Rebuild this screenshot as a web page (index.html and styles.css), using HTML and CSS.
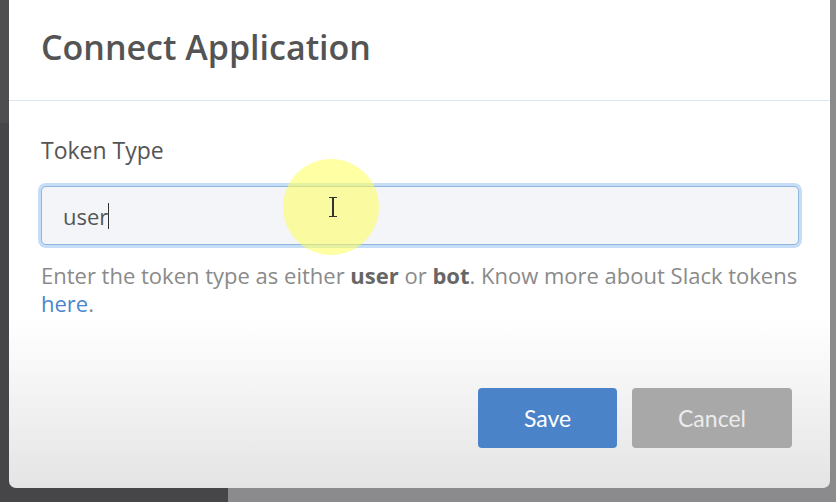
FILE: index.html
```
<!DOCTYPE html>
<html lang="en">
  <head>
    <meta charset="UTF-8" />
    <meta name="viewport" content="width=device-width, initial-scale=1.0" />
    <title>Connect Application</title>
    <link rel="stylesheet" href="styles.css">
  </head>
  <body>
    <div class="backdrop">
      <div class="backdropLeft"></div>
      <div class="backdropRight"></div>
    </div>

    <div class="modal">
      <div class="modalHeader">
        <h1 class="title">Connect Application</h1>
      </div>

      <div class="modalBody">
        <label class="label">Token Type</label>
        <div class="input">
          <span class="value">user</span><span class="caret"></span>
        </div>
        <p class="help">
          Enter the token type as either <b>user</b> or <b>bot</b>. Know more about Slack tokens
          <a href="#">here</a>.
        </p>
      </div>

      <div class="modalFooter">
        <button class="btn save">Save</button>
        <button class="btn cancel">Cancel</button>
      </div>

      <!-- screen recorder click highlight -->
      <div class="highlight"></div>
      <div class="ibeam"></div>
    </div>
  </body>
</html>
```

FILE: styles.css
```
body {
  margin: 0;
  width: 836px;
  height: 502px;
  overflow: hidden;
  position: relative;
  font-family: "Open Sans", Lato, sans-serif;
  background-color: #48494b;
}

.backdrop {
  display: grid;
  grid-template-columns: 228px 1fr;
  height: 100%;
}

.backdropLeft {
  background: linear-gradient(#4e4e50 0, #4e4e50 123px, #464649 123px);
}

.backdropRight {
  background-color: #8b8b8d;
}

.modal {
  position: absolute;
  top: 0;
  left: 9px;
  width: 821px;
  height: 488px;
  border-radius: 0 0 7px 7px;
  background: linear-gradient(#ffffff 0, #ffffff 320px, #e4e4e4 488px);
  display: flex;
  flex-direction: column;
  overflow: hidden;
}

.modalHeader {
  height: 100px;
  border-bottom: 1px solid #dde5f0;
  padding: 0 32px;
  display: flex;
  align-items: center;
}

.title {
  margin: 0 0 7px 0;
  font-size: 34px;
  line-height: 40px;
  font-weight: 600;
  color: #545454;
}

.modalBody {
  padding: 35px 31px 0 32px;
}

.label {
  display: block;
  font-size: 23px;
  line-height: 28px;
  color: #555;
  margin-bottom: 22px;
}

.input {
  height: 57px;
  border: 1px solid #8fb5dd;
  border-radius: 5px;
  box-shadow: 0 0 0 3px #c6ddf8;
  background-color: #f3f5f9;
  display: flex;
  align-items: center;
  padding: 0 21px;
  font-size: 22px;
  color: #555;
}

.caret {
  display: inline-block;
  width: 1px;
  height: 26px;
  background-color: #333;
}

.help {
  margin: 16px 0 0 0;
  font-size: 22px;
  line-height: 28px;
  color: #8a8a8a;
}

.help b {
  color: #666;
}

.help a {
  color: #4a86cf;
  text-decoration: none;
}

.modalFooter {
  margin-top: auto;
  padding: 0 38px 40px 0;
  display: flex;
  justify-content: flex-end;
  gap: 15px;
}

.btn {
  height: 60px;
  border: none;
  border-radius: 4px;
  font-family: Lato, sans-serif;
  font-size: 23px;
  cursor: pointer;
}

.save {
  width: 139px;
  background-color: #4a83c8;
  color: #fff;
}

.cancel {
  width: 160px;
  background-color: #a8a8a8;
  color: #ececec;
}

.highlight {
  position: absolute;
  left: 274px;
  top: 159px;
  width: 96px;
  height: 96px;
  border-radius: 50%;
  background-color: rgba(255, 255, 90, 0.55);
}

.ibeam {
  position: absolute;
  left: 320px;
  top: 197px;
  width: 8px;
  height: 18px;
  border-top: 1px solid #333;
  border-bottom: 1px solid #333;
  background: linear-gradient(90deg, transparent 3px, #333 3px, #333 5px, transparent 5px);
}
```
